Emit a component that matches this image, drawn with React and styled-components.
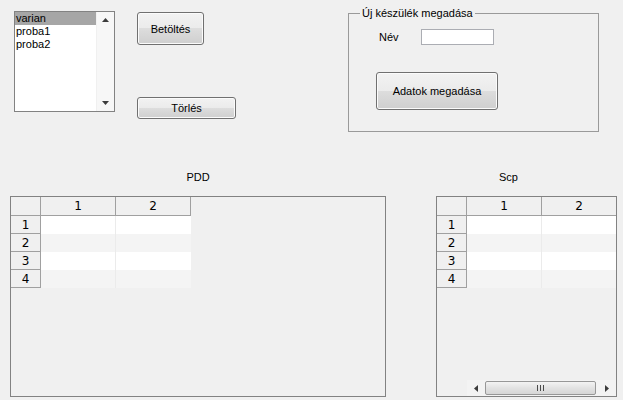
import React from 'react';
import styled, { createGlobalStyle } from 'styled-components';

const GlobalStyle = createGlobalStyle`
  html, body { margin:0; padding:0; background:#f0f0f0; }
  body { font-family:"Liberation Sans", Arial, sans-serif; font-size:11px; color:#000; }
  #root { width:623px; height:400px; overflow:hidden; }
`;

const Window = styled.div`
  width:623px; height:400px; display:flex; flex-direction:column; background:#f0f0f0;
`;
const TopArea = styled.div`
  height:171px; display:flex; align-items:flex-start; flex-shrink:0;
`;

const ListBox = styled.div`
  margin:11px 0 0 14px; width:101px; height:101px; box-sizing:border-box;
  border:1px solid #828282; background:#fff; display:flex;
`;
const ListItems = styled.div`
  flex:1; display:flex; flex-direction:column;
`;
const ListItem = styled.div`
  height:13px; line-height:13px; padding-left:1px;
  background:${p=>p.selected?'#a6a6a6':'transparent'};
`;
const VScroll = styled.div`
  width:17px; background:#f7f7f7; border-left:1px solid #f0f0f0;
  display:flex; flex-direction:column; justify-content:space-between; align-items:center;
  padding:6px 0 6px;
`;

const ButtonColumn = styled.div`
  margin-left:22px; display:flex; flex-direction:column; align-items:flex-start;
`;
const PushButton = styled.button`
  width:${p=>p.w}px; height:${p=>p.h}px; margin:${p=>p.m||0};
  box-sizing:border-box; padding:0; border:1px solid #707070; border-radius:3px;
  background:linear-gradient(#f2f2f2 0%, #ebebeb 50%, #dddddd 50%, #cfcfcf 100%);
  box-shadow:inset 0 0 0 1px #fbfbfb;
  font-family:"Liberation Sans", Arial, sans-serif; font-size:11px; color:#000;
`;

const GroupBox = styled.fieldset`
  margin:7px 0 0 112px; padding:0; width:251px; height:125px; box-sizing:border-box;
  border:1px solid #9a9a9a; display:flex; flex-direction:column; align-items:flex-start;
`;
const GroupTitle = styled.legend`
  margin-left:11px; padding:0 2px; line-height:13px; font-size:11px;
`;
const NameRow = styled.div`
  display:flex; align-items:center; margin:9px 0 0 30px;
`;
const NameLabel = styled.span`
  width:42px; line-height:13px;
`;
const TextBox = styled.div`
  width:73px; height:16px; box-sizing:border-box; background:#fff; border:1px solid #abadb3;
`;

const TablesArea = styled.div`
  display:flex; padding-left:10px; align-items:flex-start;
`;
const TablePane = styled.div`
  width:${p=>p.w}px; margin-left:${p=>p.ml||0}px; display:flex; flex-direction:column;
`;
const Caption = styled.div`
  height:13px; line-height:13px; margin-bottom:12px;
  text-align:${p=>p.left?'left':'center'}; padding-left:${p=>p.left||0}px;
`;
const TableFrame = styled.div`
  height:201px; box-sizing:border-box; border:1px solid #828282; background:#f0f0f0;
  display:flex; flex-direction:column; overflow:hidden;
`;
const GridRow = styled.div`
  display:flex; flex-shrink:0; height:${p=>p.h}px;
`;
const HeadCell = styled.div`
  width:${p=>p.w}px; flex-shrink:0; box-sizing:border-box; background:#f0f0f0;
  border-right:1px solid #a0a0a0; border-bottom:1px solid #a0a0a0;
  font-family:"DejaVu Sans", sans-serif; font-size:12px; text-align:center;
  display:flex; align-items:center; justify-content:center;
`;
const DataCell = styled.div`
  width:75px; flex-shrink:0; box-sizing:border-box;
  background:${p=>p.alt?'#f4f4f4':'#ffffff'};
  border-right:1px solid ${p=>p.last?'transparent':'#ebebeb'};
`;

const HScroll = styled.div`
  margin-top:auto; margin-left:30px; height:16px; display:flex; align-items:center; flex-shrink:0;
  background:#f3f3f3;
`;
const ArrowBtn = styled.div`
  width:17px; height:16px; display:flex; align-items:center; justify-content:center; flex-shrink:0;
`;
const Thumb = styled.div`
  width:111px; height:14px; margin-left:1px; box-sizing:border-box; border:1px solid #979797; border-radius:2px;
  background:linear-gradient(#f3f3f3, #e2e2e2 50%, #d6d6d6);
  display:flex; align-items:center; justify-content:center;
`;
const TrackGap = styled.div`
  width:2px;
`;

function Tri({ dir }) {
  const pts = {
    up: '0,4 3.5,0 7,4', down: '0,0 3.5,4 7,0',
    left: '4,0 0,3.5 4,7', right: '0,0 4,3.5 0,7',
  }[dir];
  const vert = dir === 'up' || dir === 'down';
  return (
    <svg width={vert ? 7 : 4} height={vert ? 4 : 7} viewBox={vert ? '0 0 7 4' : '0 0 4 7'}>
      <polygon points={pts} fill="#3c3c3c" />
    </svg>
  );
}

function Grip() {
  return (
    <svg width="7" height="6" viewBox="0 0 7 6">
      {[0.5, 3.5, 6.5].map(x => <line key={x} x1={x} y1="0" x2={x} y2="6" stroke="#4a4a4a" strokeWidth="1" />)}
    </svg>
  );
}

function DataTable({ width, scroll }) {
  return (
    <TableFrame style={{ width }}>
      <GridRow h={19}>
        <HeadCell w={30} />
        <HeadCell w={75}>1</HeadCell>
        <HeadCell w={75}>2</HeadCell>
      </GridRow>
      {[1, 2, 3, 4].map(n => (
        <GridRow h={18} key={n}>
          <HeadCell w={30}>{n}</HeadCell>
          <DataCell alt={n % 2 === 0} />
          <DataCell alt={n % 2 === 0} last />
        </GridRow>
      ))}
      {scroll && (
        <HScroll>
          <ArrowBtn><Tri dir="left" /></ArrowBtn>
          <Thumb><Grip /></Thumb>
          <TrackGap />
          <ArrowBtn><Tri dir="right" /></ArrowBtn>
        </HScroll>
      )}
    </TableFrame>
  );
}

export default function App() {
  return (
    <>
      <GlobalStyle />
      <Window>
        <TopArea>
          <ListBox>
            <ListItems>
              <ListItem selected>varian</ListItem>
              <ListItem>proba1</ListItem>
              <ListItem>proba2</ListItem>
            </ListItems>
            <VScroll>
              <Tri dir="up" />
              <Tri dir="down" />
            </VScroll>
          </ListBox>
          <ButtonColumn>
            <PushButton w={67} h={33} m="12px 0 0 0">Betöltés</PushButton>
            <PushButton w={99} h={22} m="52px 0 0 0">Törlés</PushButton>
          </ButtonColumn>
          <GroupBox>
            <GroupTitle>Új készülék megadása</GroupTitle>
            <NameRow>
              <NameLabel>Név</NameLabel>
              <TextBox />
            </NameRow>
            <PushButton w={122} h={38} m="27px 0 0 27px">Adatok megadása</PushButton>
          </GroupBox>
        </TopArea>
        <TablesArea>
          <TablePane w={376}>
            <Caption>PDD</Caption>
            <DataTable width={376} />
          </TablePane>
          <TablePane w={181} ml={50}>
            <Caption left={63}>Scp</Caption>
            <DataTable width={181} scroll />
          </TablePane>
        </TablesArea>
      </Window>
    </>
  );
}
